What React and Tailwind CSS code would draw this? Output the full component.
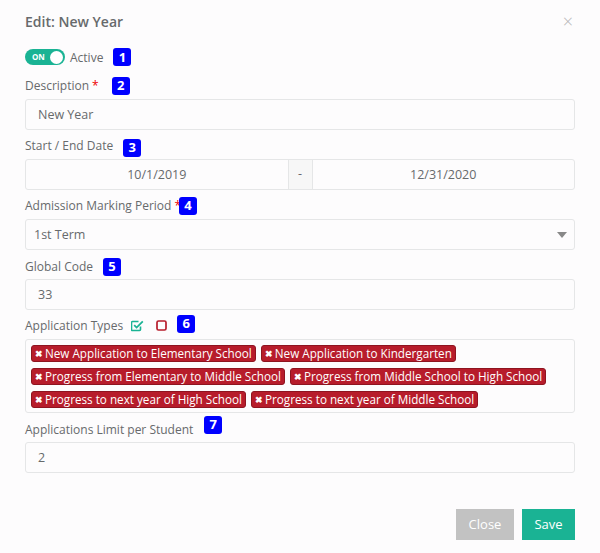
const tags = [
  "New Application to Elementary School",
  "New Application to Kindergarten",
  "Progress from Elementary to Middle School",
  "Progress from Middle School to High School",
  "Progress to next year of High School",
  "Progress to next year of Middle School",
];

function Badge({ n, className = "" }) {
  return (
    <span
      className={`inline-flex h-[18px] w-[18px] items-center justify-center rounded-[3px] bg-[#0000ff] text-[13px] font-bold leading-none text-white ${className}`}
    >
      {n}
    </span>
  );
}

function Input({ value }) {
  return (
    <div className="flex h-[31px] items-center rounded-[3px] border border-[#e5e6e7] bg-[#fdfcfd] px-[12px] pt-[2px] text-[12.5px] text-[#676a6c]">
      {value}
    </div>
  );
}

function Label({ children, badge, offset = "" }) {
  return (
    <div className="flex h-[18px] items-center pt-[1px] text-[12px] text-[#676a6c]">
      {children}
      <Badge n={badge} className={offset} />
    </div>
  );
}

export default function App() {
  return (
    <div
      className="h-[553px] w-[600px] bg-[#fdfcfd] px-[25px] pt-[12px]"
      style={{ fontFamily: '"Open Sans", sans-serif' }}
    >
      <div className="flex h-[18px] items-center justify-between">
        <h4 className="text-[14px] font-semibold text-[#676a6c]">Edit: New Year</h4>
        <span className="mr-[2px] text-[18px] font-light leading-none text-[#b5b5b5]">×</span>
      </div>

      <div className="mt-[18px] flex h-[18px] items-center">
        <div className="flex h-[16px] w-[40px] items-center justify-between rounded-full bg-[#1ab394] pl-[7px] pr-[2px]">
          <span className="text-[8px] font-bold leading-none text-white">ON</span>
          <span className="h-[13px] w-[13px] rounded-full bg-white" />
        </div>
        <span className="ml-[5px] pt-[1px] text-[12px] text-[#676a6c]">Active</span>
        <Badge n="1" className="ml-[10px]" />
      </div>

      <div className="mt-[10px]">
        <Label badge="2" offset="ml-[13px]">
          Description <span className="ml-[3px] text-[#e00]">*</span>
        </Label>
      </div>
      <div className="mt-[5px]">
        <Input value="New Year" />
      </div>

      <div className="mt-[6px]">
        <Label badge="3" offset="relative top-[2px] ml-[10px]">
          Start / End Date
        </Label>
      </div>
      <div className="mt-[5px] flex h-[31px] rounded-[3px] border border-[#e5e6e7] bg-[#fdfcfd] text-[12.5px] text-[#676a6c]">
        <div className="flex flex-1 items-center justify-center pt-[2px]">10/1/2019</div>
        <div className="flex w-[25px] items-center justify-center border-x border-[#e5e6e7] bg-[#f7f7f7]">
          -
        </div>
        <div className="flex flex-1 items-center justify-center pt-[2px]">12/31/2020</div>
      </div>

      <div className="mt-[6px]">
        <Label badge="4" offset="-ml-[2px]">
          Admission Marking Period <span className="ml-[3px] text-[#e00]">*</span>
        </Label>
      </div>
      <div className="mt-[5px] flex h-[31px] items-center justify-between rounded-[3px] border border-[#e5e6e7] bg-[#fdfcfd] pl-[8px] pr-[7px] text-[12.5px] text-[#676a6c]">
        <span className="pt-[2px]">1st Term</span>
        <svg width="10" height="6" viewBox="0 0 10 6">
          <path d="M0 0h10L5 6z" fill="#888" />
        </svg>
      </div>

      <div className="mt-[7px]">
        <Label badge="5" offset="ml-[10px]">
          Global Code
        </Label>
      </div>
      <div className="mt-[4px]">
        <Input value="33" />
      </div>

      <div className="mt-[6px]">
        <div className="flex h-[18px] items-center pt-[1px] text-[12px] text-[#676a6c]">
          Application Types
          <svg className="ml-[8px]" width="13" height="12" viewBox="0 0 13 12">
            <path
              d="M9.5 6.5v3a1 1 0 0 1-1 1h-7a1 1 0 0 1-1-1v-7a1 1 0 0 1 1-1h6"
              fill="none"
              stroke="#1ab394"
              strokeWidth="1.6"
            />
            <path d="M3.2 5.2l2.4 2.4 6.2-6.2" fill="none" stroke="#1ab394" strokeWidth="1.8" />
          </svg>
          <svg className="ml-[12px]" width="11" height="11" viewBox="0 0 11 11">
            <rect x="1" y="1" width="9" height="9" rx="1.5" fill="none" stroke="#b71c2b" strokeWidth="1.7" />
          </svg>
          <Badge n="6" className="relative -top-[2px] ml-[10px]" />
        </div>
      </div>
      <div className="mt-[5px] flex h-[74px] flex-wrap content-start gap-x-[5px] gap-y-[6px] rounded-[3px] border border-[#e5e6e7] bg-[#fdfcfd] px-[5px] pt-[5px]">
        {tags.map((t) => (
          <span
            key={t}
            className="flex h-[17px] items-center rounded-[3px] border border-[#8e1420] bg-[#b71c2b] pl-[3px] pr-[3px] text-[11.7px] leading-none text-white"
          >
            <span className="mr-[2px] text-[9px] font-bold">✖</span>
            {t}
          </span>
        ))}
      </div>

      <div className="mt-[7px]">
        <Label badge="7" offset="relative -top-[5px] ml-[11px]">
          Applications Limit per Student
        </Label>
      </div>
      <div className="mt-[4px]">
        <Input value="2" />
      </div>

      <div className="mt-[36px] flex justify-end gap-[8px]">
        <button className="h-[31px] w-[58px] bg-[#c2c2c2] text-[13px] text-white">Close</button>
        <button className="h-[31px] w-[53px] bg-[#1ab394] text-[13px] text-white">Save</button>
      </div>
    </div>
  );
}
